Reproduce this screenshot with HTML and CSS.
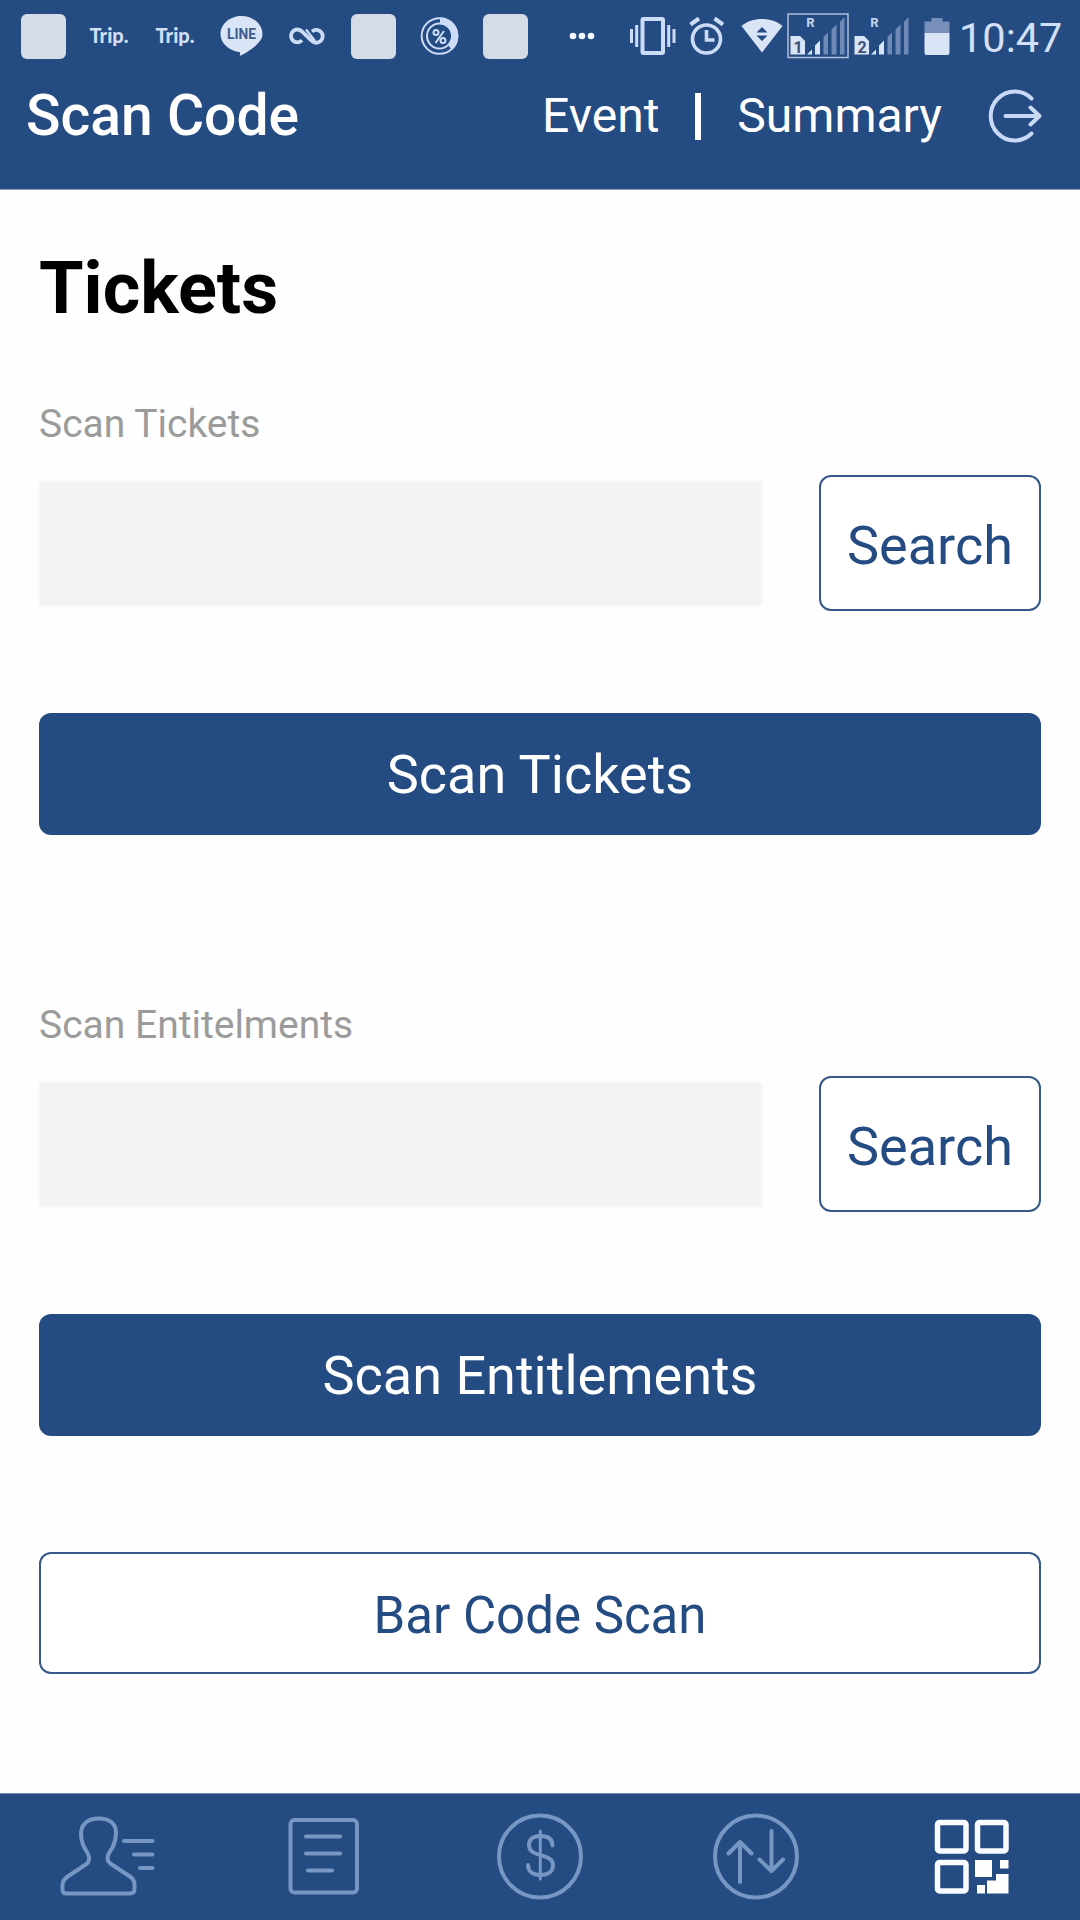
FILE: index.html
```html
<!DOCTYPE html>
<html lang="en">
<head>
<meta charset="utf-8">
<title>Scan Code</title>
<link rel="stylesheet" href="styles.css">
</head>
<body>
<div class="app">
  <header class="top">
    <div class="status">
      <div class="notices">
        <span class="cell"><i class="tile"></i></span>
        <span class="cell trip">Trip.</span>
        <span class="cell trip">Trip.</span>
        <span class="cell">
          <svg width="66" height="72" viewBox="208.5 0 66 72"><path class="fill" d="M242 16c-11.500 0-21 8-21 18 0 9 8 16.500 18.500 18 1.500.4 1.200 1.500.8 4 4-1.500 13-7 17.500-12 3.400-3.400 5.200-6 5.200-10 0-10-9.500-18-21-18z"/><text class="line-text" x="242" y="39" text-anchor="middle" textLength="29" lengthAdjust="spacingAndGlyphs">LINE</text></svg>
        </span>
        <span class="cell">
          <svg width="66" height="72" viewBox="274 0 66 72"><g class="stroke"><path stroke-width="3.800" d="M302 40.300A6.400 6.400 0 1 1 302.300 31.800L311.500 40.600A6.400 6.400 0 1 0 312 31.600"/><path stroke-width="2.400" d="M306 29.500L315 41"/></g></svg>
        </span>
        <span class="cell"><i class="tile"></i></span>
        <span class="cell">
          <svg width="66" height="72" viewBox="406 0 66 72"><g class="stroke"><circle cx="439.500" cy="36" r="17.800" stroke-width="2"/><circle cx="439.500" cy="36" r="12.500" stroke-width="2"/><path d="M440 20.700A15.300 15.300 0 0 1 450 47.500" stroke-width="6.500"/><path d="M444 31l-8.500 12" stroke-width="2"/><circle cx="436" cy="32.500" r="2.500" stroke-width="2"/><circle cx="443" cy="40.500" r="2.500" stroke-width="2"/></g></svg>
        </span>
        <span class="cell"><i class="tile"></i></span>
      </div>
      <svg width="88" height="72" viewBox="538 0 88 72"><g fill="#f4f8ff"><circle cx="573" cy="36" r="3.300"/><circle cx="582" cy="36" r="3.300"/><circle cx="591" cy="36" r="3.300"/></g></svg>
      <svg width="57" height="72" viewBox="626 0 57 72"><g class="stroke"><rect x="642.500" y="19" width="20.500" height="34" rx="1" stroke-width="4"/><path d="M631.500 29v14M636.700 25v22M668.700 25v22M674 29v14" stroke-width="3"/></g></svg>
      <svg width="52" height="72" viewBox="683 0 52 72"><g class="stroke"><circle cx="706.500" cy="39" r="14" stroke-width="3.600"/><path d="M706.500 30v10h8" stroke-width="3.600"/><path d="M690.500 24.500l8.500-6M714.500 18.500l8.500 6" stroke-width="4"/></g></svg>
      <svg width="51" height="72" viewBox="735 0 51 72"><path class="fill" d="M741.500 26c10-9.500 31-9.500 41 0L762 52.500z"/><path fill="#254b83" d="M756.500 32.500l5.500-5.500 5.500 5.500zM756.500 35.500h11L762 41z"/></svg>
      <svg width="66" height="72" viewBox="786 0 66 72"><rect x="788" y="14" width="60" height="43.500" fill="none" stroke="#aebfda" stroke-width="1.500"/><path class="fill" d="M790.500 54.500V36h9.500l5 5v13.500zM807 54.500l5-5v5zM815 54.500v-9l5-5v14z"/><g class="dim"><path d="M823.500 54.500V37l4.500-4.500v22zM831.500 54.500V29.500l5-5v30zM840 54.500V22l4.500-5v37.500z"/></g><text class="sim" x="798" y="52.500">1</text><text class="roam" x="810.500" y="27">R</text></svg>
      <svg width="62" height="72" viewBox="852 0 62 72"><path class="fill" d="M854.500 54.500V36h9.500l5 5v13.500zM871 54.500l5-5v5zM879 54.500v-9l5-5v14z"/><g class="dim"><path d="M887.500 54.500V37l4.500-4.500v22zM895.500 54.500V29.500l5-5v30zM904 54.500V22l4.500-5v37.500z"/></g><text class="sim" x="862" y="52.500">2</text><text class="roam" x="874.500" y="27">R</text></svg>
      <svg width="45" height="72" viewBox="914 0 45 72"><path fill="#7890b9" d="M924.500 34V21.500h7V18h11v3.500h7V34z"/><path class="fill" d="M924.500 33H949.500v20a2 2 0 0 1-2 2h-21a2 2 0 0 1-2-2z"/></svg>
      <span class="clock">10:47</span>
    </div>
    <div class="bar">
      <h1 class="title">Scan Code</h1>
      <nav class="links"><a>Event</a><i class="divider"></i><a>Summary</a></nav>
      <svg class="logout" width="60" height="60" viewBox="984 86 60 60"><g fill="none" stroke="#c8d9f5" stroke-width="4" stroke-linecap="round" stroke-linejoin="round"><path d="M1031.500 98.500A24 24.500 0 1 0 1031.500 133.500"/><path d="M1005.500 116H1038M1030.500 107.500l9 8.500-9 8.500"/></g></svg>
    </div>
  </header>

  <main class="content">
    <h2 class="heading">Tickets</h2>
    <section class="group">
      <label class="label" for="tickets">Scan Tickets</label>
      <div class="row"><input class="field" id="tickets" type="text"><button class="outline search">Search</button></div>
      <button class="solid">Scan Tickets</button>
    </section>
    <section class="group second">
      <label class="label" for="entitlements">Scan Entitelments</label>
      <div class="row"><input class="field" id="entitlements" type="text"><button class="outline search">Search</button></div>
      <button class="solid">Scan Entitlements</button>
    </section>
    <button class="outline barcode">Bar Code Scan</button>
  </main>

  <nav class="tabs">
    <svg viewBox="0 1793 216 127"><g class="tab-line"><path stroke-width="4" d="M66 1893.500h64c3 0 4.500-1.500 4.500-4.500v-4c0-4-1.500-6.500-4.500-8.500l-19-12.500c-3.500-2.500-4.200-5-3-8.500 1-3 2.500-4.500 4.500-8 2.500-5 3.500-9.500 3.500-14.500 0-9.500-7-14.500-17.500-14.500s-17.500 5.500-17.500 15.500c0 6 1.500 10.500 4.500 15.500 2 3 3 4.500 3.500 7.500.5 4-.5 6-4 8l-18 12c-3.500 2.500-4.500 5-4.500 8.500v4c0 2.500 1 4 3.500 4z"/><path stroke-width="4" d="M124 1841h28.500M134 1854.500h18.500M140 1868h12.500"/></g></svg>
    <svg viewBox="216 1793 216 127"><g class="tab-line" stroke-width="4"><rect x="290.500" y="1820" width="66.500" height="72.500" rx="4"/><path d="M306 1836.500h34M306 1853.500h34M308 1870.500h24"/></g></svg>
    <svg viewBox="432 1793 216 127"><g class="tab-line" stroke-width="4"><circle cx="540" cy="1856.500" r="41"/><path d="M540.300 1831v48" stroke-width="3"/><path d="M552.500 1845.500c0-6-4-9.500-12-9.500s-11.500 4-11.500 9c0 6 4 8 11.500 10.200 8 2.300 12.500 4.300 12.500 10.300 0 6-5 9.500-12.500 9.500s-12.500-3.500-12.500-10"/></g></svg>
    <svg viewBox="648 1793 216 127"><g class="tab-line" stroke-width="4"><circle cx="756" cy="1856.500" r="41"/><path d="M740 1882v-40M728.500 1853.500l11.500-11.500 11.500 11.500M771.500 1831v40M759.500 1859.500l12 11.500 11.500-11.500"/></g></svg>
    <svg viewBox="864 1793 216 127"><g fill="none" stroke="#f8fbff" stroke-width="5.500"><rect x="937.500" y="1822.500" width="28.500" height="28.500" rx="2"/><rect x="977.500" y="1822.500" width="28.500" height="28.500" rx="2"/><rect x="937.500" y="1862.500" width="28.500" height="28.500" rx="2"/></g><path fill="#fff" d="M975 1860h17v17h-17zM1000 1860h8.500v8.500h-8.500zM977 1885h8v8.500h-8zM996 1874h12.500v19.500h-21.500v-13h9z"/></svg>
  </nav>
</div>
</body>
</html>
```
FILE: styles.css
```css
* { box-sizing: border-box; }
body { margin: 0; background: #fefefe; font-family: Roboto, sans-serif; }
.app { display: flex; flex-direction: column; width: 1080px; height: 1920px; }
h1, h2 { margin: 0; }
svg { display: block; flex: none; }
button { display: block; padding: 0; font-family: inherit; }

.top { height: 190px; background: #254b83; border-bottom: 1px solid #8c9dba; }
.status { display: flex; height: 72px; padding-left: 10px; align-items: center; }
.notices { display: flex; }
.cell { display: flex; width: 66px; height: 72px; align-items: center; justify-content: center; }
.tile { width: 45px; height: 45px; border-radius: 6px; background: #d5dce8; }
.trip { color: #d0def4; font: 900 20px/1 Lato, sans-serif; padding-bottom: 3px; }
.fill { fill: #d9e4f7; }
.stroke { fill: none; stroke: #cddcf6; }
.dim { fill: #6f8ab7; }
.line-text { font: bold 14px Roboto, sans-serif; fill: #3e5c8e; }
.sim { font: bold 16px Roboto, sans-serif; fill: #3a5078; text-anchor: middle; }
.roam { font: bold 13px Roboto, sans-serif; fill: #c6d4ec; text-anchor: middle; }
.clock { color: #d3e0f7; font-size: 41.5px; line-height: 72px; padding-top: 3px; }

.bar { display: flex; height: 88px; align-items: center; padding: 0 36px 0 26px; }
.title { color: #fff; font-size: 57px; font-weight: 500; line-height: 88px; }
.links { display: flex; align-items: center; margin-left: auto; color: #fff; font-size: 48px; line-height: 88px; }
.divider { width: 6px; height: 47px; margin: 0 36px 0 36px; background: #fff; }
.logout { margin-left: 42px; }

.content { flex: 1; padding: 0 39px; }
.heading { padding-top: 56px; font-size: 72px; line-height: 86px; font-weight: 700; color: #000; }
.label { display: block; margin-top: 69px; height: 46px; color: #9b9b9b; font-size: 39px; line-height: 46px; }
.row { display: flex; align-items: center; justify-content: space-between; height: 136px; margin-top: 28px; }
.field { width: 723px; height: 125px; border: 0; border-radius: 3px; background: #f2f2f2; box-shadow: inset 0 0 4px #fafafa, 0 0 3px #f8f8f8; }
.outline { border: 2px solid #36588b; border-radius: 12px; background: #fff; color: #254b83; }
.search { width: 222px; height: 136px; padding-top: 4px; font-size: 54px; }
.solid { width: 100%; height: 122px; margin-top: 102px; border: 0; border-radius: 12px; background: #254b83; color: #fff; font-size: 54px; }
.second .label { margin-top: 167px; }
.barcode { width: 100%; height: 122px; margin-top: 116px; padding-top: 4px; font-size: 51px; }

.tabs { display: grid; grid-template-columns: repeat(5, 1fr); height: 127px; background: #254b83; border-top: 1px solid #7187ab; }
.tabs svg { width: 216px; height: 127px; margin-top: -1px; }
.tab-line { fill: none; stroke: #7696c3; stroke-linecap: round; stroke-linejoin: round; }
```
